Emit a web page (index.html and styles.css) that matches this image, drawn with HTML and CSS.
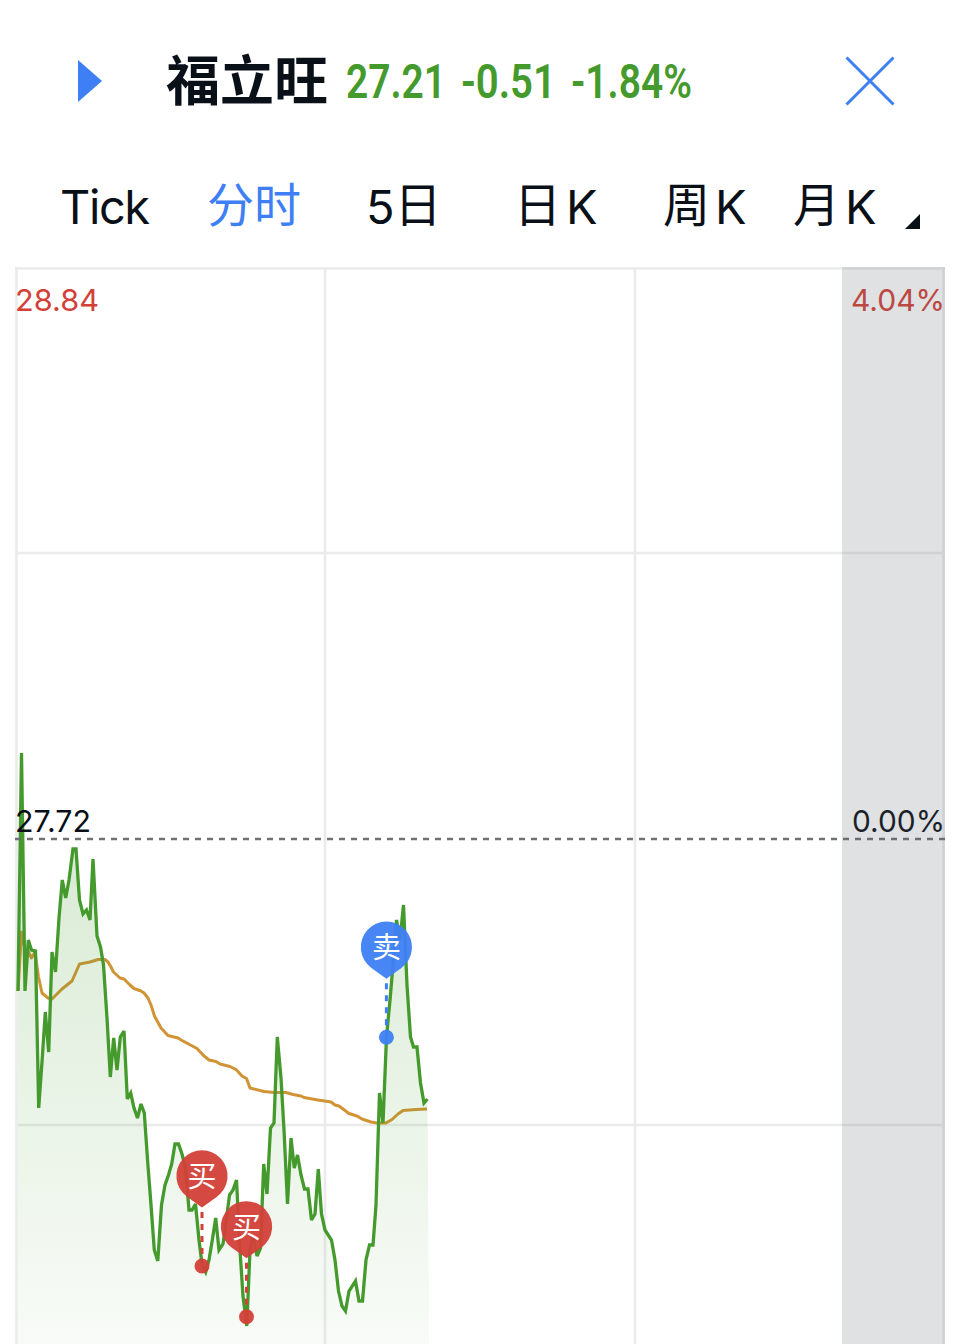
FILE: index.html
```html
<!DOCTYPE html>
<html lang="zh-CN">
<head>
    <meta charset="UTF-8">
    <meta name="viewport" content="width=device-width, initial-scale=1.0">
    <title>福立旺</title>
    <link rel="stylesheet" href="styles.css">
</head>
<body>
    <header class="quote">
        <svg class="expand" width="24" height="42" viewBox="0 0 24 42"><path d="M0 0L24 21L0 42Z"/></svg>
        <h1 class="name">福立旺</h1>
        <svg class="prices" width="400" height="80" viewBox="0 0 400 80">
            <text x="1" y="57" textLength="100" lengthAdjust="spacingAndGlyphs">27.21</text>
            <text x="116" y="57" textLength="95" lengthAdjust="spacingAndGlyphs">-0.51</text>
            <text x="226" y="57" textLength="121" lengthAdjust="spacingAndGlyphs">-1.84%</text>
        </svg>
        <svg class="close" width="50" height="50" viewBox="0 0 50 50"><path d="M1.500 1.500L48.500 48.500M48.500 1.500L1.500 48.500"/></svg>
    </header>
    <nav class="tabs">
        <span class="tab tick">Tick</span>
        <span class="tab active"><b>分时</b></span>
        <span class="tab five">5<b>日</b></span>
        <span class="tab day"><b>日</b><i>K</i></span>
        <span class="tab week"><b>周</b><i>K</i></span>
        <span class="tab month"><b>月</b><i>K</i></span>
        <svg class="more" width="15" height="15" viewBox="0 0 15 15"><path d="M15 0V15H0Z"/></svg>
    </nav>
    <main class="chart">
        <svg width="960" height="1078" viewBox="0 266 960 1078">
            <defs>
                <linearGradient id="fade" gradientUnits="userSpaceOnUse" x1="0" y1="753" x2="0" y2="1365">
                    <stop offset="0" stop-color="#459a2d" stop-opacity="0.23"/>
                    <stop offset="1" stop-color="#459a2d" stop-opacity="0.03"/>
                </linearGradient>
            </defs>

            <!-- grid -->
            <path class="grid" d="M15 268.5H945M15 553H945M15 1125H945M16.5 267V1344M325 267V1344M635 267V1344M943.5 267V1344"/>

            <text class="label up" x="15" y="311" textLength="84" lengthAdjust="spacingAndGlyphs">28.84</text>
            <text class="label up" x="851" y="311" textLength="94" lengthAdjust="spacingAndGlyphs">4.04%</text>

            <!-- average price -->
            <polyline class="average" points="18,991 21.5,932 25,950 28,951 31.5,958 35,952 38.5,977 42,993 48,998 52,999 55,996 62,989 72,981 76,972 79.5,964 90,962 98,959.5 105,959.5 108,962 111,967 113.5,972 120,978 124,979 130,985 134,988.5 141,991 144,993 148,998 151,1005 154.5,1016 161,1028 168,1035.5 178,1038 182,1040.5 197,1048.5 203,1055 209,1060 216,1061.5 220,1064 230,1066.5 236,1069.5 242,1076 246.5,1078.5 250,1088 264,1091.5 274,1092.5 286,1092.5 293,1094.5 301,1096 304,1097.5 318,1100 331,1102 335,1105 339,1106 349,1113.5 357,1116 362,1119 371,1122 377,1123 386,1123 392,1119.5 398,1114 403,1110.5 416,1109.5 427,1109"/>

            <path class="area" d="M18 991L21.5 753L25 991L28.3 940L31.5 950H35.5L38.7 1108L42 1062L45.3 1012L48.7 1052L52 949L55.5 972L59 918L62.3 880L65.7 898L69 880L73 849H76L79.5 900L83 914L86.5 910L90 920L93 859L97 936L100.5 947L103.5 965L107 1018L110.3 1077L113.7 1038L117 1070L120.3 1037L124 1030L127.3 1100L130.7 1093L134 1108L137.5 1118L141 1104L144.3 1113L147.7 1162L151 1205L154.3 1250L157.8 1262L161.5 1205L165 1185L168.5 1175L171.7 1164L175 1144H178.5L182 1154L185.5 1168L189 1210H192L195.5 1204L199 1240L202 1264L205.7 1272L209 1260L212.3 1240L215.7 1218L219 1250L223 1244L226 1222L229.5 1195L233 1190L236.5 1178L240 1250L243 1296L246.8 1324L250 1250L253 1235L257 1256L260.5 1248L263.7 1164L267 1194L270.5 1128L274 1123L277.3 1037L281 1078L284 1130L287.5 1204L291 1138L294.3 1170L297.5 1155L301 1175L304.5 1189H308L311.5 1220L315 1214L318.3 1169L321.5 1214L325 1230L331.5 1240L335 1260L338.5 1291L342 1306L345.5 1311L349 1291L355.5 1281L359 1301H362.5L366 1260L369.5 1245H373L376 1205L379.5 1093L383 1123L386.5 1037L390 1000L393 965L396.5 920L400 940L403.5 905L407 985L410.5 1037L413.5 1047H417L420.5 1083L424 1104L427.5 1099L429 1344H18Z"/>

            <!-- price -->
            <polyline class="price" points="18,991 21.5,753 25,991 28.3,940 31.5,950 35.5,951 38.7,1108 42,1062 45.3,1012 48.7,1052 52,952 55.5,972 59,918 62.3,880 65.7,898 69,880 73,849 76,849 79.5,900 83,914 86.5,910 90,920 93,859 97,936 100.5,947 103.5,965 107,1018 110.3,1077 113.7,1038 117,1070 120.3,1037 124,1031 127.3,1099 130.7,1093 134,1108 137.5,1118 141,1104 144.3,1113 147.7,1162 151,1205 154.3,1250 157.8,1261 161.5,1205 165,1185 168.5,1175 171.7,1164 175,1144 178.5,1144 182,1154 185.5,1168 189,1210 192,1210 195.5,1204 199,1240 202,1264 205.7,1272 209,1260 212.3,1240 215.7,1218 219,1250 223,1244 226,1222 229.5,1195 233,1190 236.5,1180 240,1250 243,1296 246.8,1326 250,1250 253,1235 257,1256 260.5,1248 263.7,1164 267,1194 270.5,1128 274,1123 277.3,1037 281,1078 284,1130 287.5,1204 291,1138 294.3,1168 297.5,1155 301,1175 304.5,1189 308,1189 311.5,1220 315,1214 318.3,1169 321.5,1214 325,1230 331.5,1240 335,1260 338.5,1291 342,1306 345.5,1311 349,1291 355.5,1281 359,1301 362.5,1301 366,1260 369.5,1245 373,1245 376,1205 379.5,1093 383,1123 386.5,1037 390,1000 393,965 396.5,920 400,940 403.5,905 407,985 410.5,1037 413.5,1047 417,1047 420.5,1083 424,1103 427.5,1099"/>

            <path class="zero" d="M15 839H945"/>
            <text class="label" x="15" y="832" textLength="76" lengthAdjust="spacingAndGlyphs">27.72</text>
            <text class="label" x="852" y="832" textLength="93" lengthAdjust="spacingAndGlyphs">0.00%</text>

            <rect class="shade" x="842" y="267" width="103" height="1077"/>

            <!-- trades -->
            <g class="pin buy" transform="translate(202 1176)">
                <path class="lead" d="M0 36V84"/>
                <path d="M0 31.5L-15 20.7A25.6 25.6 0 1 1 15 20.7Z"/>
                <circle cy="90" r="7.5"/>
                <text y="11">买</text>
            </g>
            <g class="pin buy" transform="translate(246.5 1226.8)">
                <path class="lead" d="M0 36V84"/>
                <path d="M0 31.5L-15 20.7A25.6 25.6 0 1 1 15 20.7Z"/>
                <circle cy="90" r="7.5"/>
                <text y="11">买</text>
            </g>
            <g class="pin sell" transform="translate(386.4 947.2)">
                <path class="lead" d="M0 36V84"/>
                <path d="M0 31.5L-15 20.7A25.6 25.6 0 1 1 15 20.7Z"/>
                <circle cy="90" r="7.5"/>
                <text y="11">卖</text>
            </g>
        </svg>
    </main>
</body>
</html>
```
FILE: styles.css
```css
body {
    margin: 0;
    width: 960px;
    height: 1344px;
    overflow: hidden;
    background-color: #fff;
    color: #0a1018;
    font-family: Inter, "Noto Sans CJK SC", sans-serif;
}

svg {
    display: block;
    flex: none;
}

.quote {
    display: flex;
    align-items: center;
    box-sizing: border-box;
    height: 162px;
    padding: 0 65px 0 78px;
}

.expand {
    fill: #3e7ff6;
}

.name {
    margin: 0 0 6px 64px;
    width: 163px;
    font-family: "Noto Sans CJK SC", sans-serif;
    font-size: 54px;
    font-weight: 700;
    line-height: 80px;
    white-space: nowrap;
}

.prices {
    margin-left: 16px;
    fill: #459a2d;
    font-family: Roboto, sans-serif;
    font-size: 49px;
    font-weight: 600;
}

.close {
    margin-left: auto;
    fill: none;
    stroke: #3e7ff6;
    stroke-width: 3;
}

.tabs {
    display: flex;
    height: 104px;
    padding-left: 60px;
    font-size: 47px;
    line-height: 90px;
    white-space: nowrap;
}

.tab b,
.tab i {
    font-style: normal;
    font-weight: 400;
}

.tab b {
    line-height: 0;
    vertical-align: 2px;
}

.tab i {
    margin-left: 5px;
}

.tick {
    width: 147px;
    letter-spacing: -1.4px;
}

.active {
    width: 159px;
    color: #3e7ff6;
}

.five {
    width: 148px;
}

.day {
    width: 149px;
}

.week {
    width: 130px;
}

.month {
    width: 112px;
}

.more {
    margin-top: 52px;
    fill: #0a1018;
}

.grid {
    fill: none;
    stroke: #ebebed;
    stroke-width: 2.6;
}

.label {
    fill: #0a1018;
    font-size: 30px;
}

.up {
    fill: #d24038;
}

.average,
.price {
    fill: none;
    stroke: #d19435;
    stroke-width: 3;
    stroke-linejoin: round;
}

.price {
    stroke: #459a2d;
    stroke-width: 3.3;
    stroke-linejoin: miter;
    stroke-miterlimit: 3;
}

.area {
    fill: url(#fade);
}

.zero {
    stroke: #707074;
    stroke-width: 2.4;
    stroke-dasharray: 6 6;
}

.shade {
    fill: #646770;
    fill-opacity: 0.2;
}

.pin {
    fill-opacity: 0.95;
}

.pin text {
    fill: #fff;
    fill-opacity: 1;
    font-family: "Noto Sans CJK SC", sans-serif;
    font-size: 29px;
    text-anchor: middle;
}

.buy {
    fill: #d24038;
}

.sell {
    fill: #3e7ff6;
}

.lead {
    stroke: #d24038;
    stroke-width: 3;
    stroke-dasharray: 6 6;
}

.sell .lead {
    stroke: #3e7ff6;
}
```
